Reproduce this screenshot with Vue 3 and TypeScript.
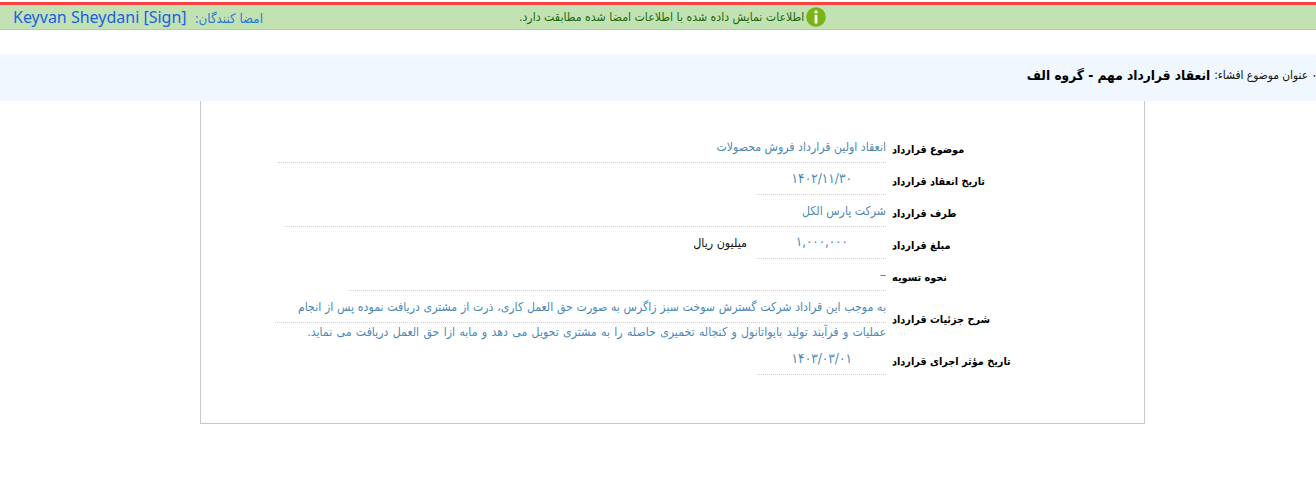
<script setup lang="ts">
interface Row { label: string; value: string; kind: string; unit?: string }
const rows: Row[] = [
  { label: 'موضوع قرارداد', value: 'انعقاد اولین قرارداد فروش محصولات', kind: 'w608' },
  { label: 'تاریخ انعقاد قرارداد', value: '۱۴۰۲/۱۱/۳۰', kind: 'w129 date' },
  { label: 'طرف قرارداد', value: 'شرکت پارس الکل', kind: 'w601' },
  { label: 'مبلغ قرارداد', value: '۱,۰۰۰,۰۰۰', kind: 'w129 date amount', unit: 'میلیون ریال' },
  { label: 'نحوه تسویه', value: '–', kind: 'w537 dash' }
]
</script>

<template>
  <div class="page">
    <header class="status">
      <div class="signers">
        <a class="signer">Keyvan Sheydani [Sign]</a>
        <span class="signer-label">امضا کنندگان:</span>
      </div>
      <div class="message">
        <span class="message-text">اطلاعات نمایش داده شده با اطلاعات امضا شده مطابقت دارد.</span>
        <svg class="info" width="20" height="20" viewBox="0 0 20 20" aria-hidden="true">
          <circle cx="10" cy="10" r="9.8" fill="#78b416" />
          <circle cx="10" cy="5" r="1.7" fill="#fff" />
          <rect x="8.6" y="8" width="2.8" height="8.5" fill="#fff" />
        </svg>
      </div>
    </header>

    <section class="band">
      <span class="bullet">•</span>
      <span class="band-label">عنوان موضوع افشاء:</span>
      <strong class="band-title">انعقاد قرارداد مهم - گروه الف</strong>
    </section>

    <main class="card">
      <div v-for="row in rows" :key="row.label" class="row">
        <div class="values">
          <span v-if="row.unit" class="unit">{{ row.unit }}</span>
          <span class="value" :class="row.kind">{{ row.value }}</span>
        </div>
        <div class="label">{{ row.label }}</div>
      </div>

      <div class="row row-detail">
        <div class="values detail">
          <div class="line line-first">به موجب این قراداد شرکت گسترش سوخت سبز زاگرس به صورت حق العمل کاری، ذرت از مشتری دریافت نموده پس از انجام</div>
          <div class="line">عملیات و فرآیند تولید بایواتانول و کنجاله تخمیری حاصله را به مشتری تحویل می دهد و مابه ازا حق العمل دریافت می نماید.</div>
        </div>
        <div class="label">شرح جزئیات قرارداد</div>
      </div>

      <div class="row row-last">
        <div class="values">
          <span class="value w129 date">۱۴۰۳/۰۳/۰۱</span>
        </div>
        <div class="label">تاریخ مؤثر اجرای قرارداد</div>
      </div>
    </main>
  </div>
</template>

<style>
html, body { margin: 0; background: #fff; }
</style>

<style scoped>
.page {
  width: 1316px;
  height: 488px;
  padding-top: 2px;
  box-sizing: border-box;
  overflow: hidden;
  background: #fff;
  font-family: "DejaVu Sans Condensed", "DejaVu Sans", "Liberation Sans", sans-serif;
}
.status {
  display: flex;
  align-items: center;
  height: 28px;
  box-sizing: border-box;
  border-top: 3px solid #f94144;
  border-bottom: 1px solid #b9c9b0;
  background: #c2e2b3;
  padding-left: 13px;
}
.signers {
  display: flex;
  align-items: center;
  gap: 8px;
  width: 506px;
}
.signer {
  color: #1a5fe6;
  font-size: 16px;
  font-family: "Noto Sans", "DejaVu Sans", sans-serif;
}
.signer-label {
  color: #2a78d6;
  font-size: 13.2px;
  direction: rtl;
  padding-top: 2px;
}
.message {
  display: flex;
  align-items: center;
  gap: 2px;
}
.message-text {
  color: #1c6a10;
  font-size: 12.2px;
  direction: rtl;
}
.info { flex: none; }
.band {
  display: flex;
  direction: rtl;
  align-items: center;
  height: 47px;
  box-sizing: border-box;
  padding-bottom: 5px;
  margin-top: 24px;
  background: #f0f7fe;
  color: #111;
}
.bullet {
  width: 3px;
  font-size: 6px;
  margin-left: 5px;
}
.band-label {
  font-size: 11.8px;
  margin-left: 4px;
}
.band-title {
  font-size: 13.6px;
  color: #000;
}
.card {
  margin-left: 200px;
  width: 945px;
  height: 323px;
  box-sizing: border-box;
  border: 1px solid #c8c8c8;
  border-top: 0;
  padding-top: 30px;
}
.row {
  display: flex;
  height: 32px;
  gap: 6px;
}
.values {
  display: flex;
  justify-content: flex-end;
  align-items: flex-start;
  width: 685px;
  flex: none;
}
.value {
  display: block;
  box-sizing: border-box;
  height: 32px;
  line-height: 32px;
  direction: rtl;
  color: #4a88b5;
  font-size: 12.2px;
  border-bottom: 1px dotted #d2d2d2;
  white-space: nowrap;
}
.w608 { width: 608px; }
.w601 { width: 601px; }
.w537 { width: 537px; }
.w129 { width: 129px; }
.date { padding-right: 34px; font-size: 13.5px; line-height: 30px; }
.amount { padding-right: 38px; font-size: 13.2px; }
.dash { font-size: 14px; line-height: 30px; }
.unit {
  direction: rtl;
  font-size: 12.4px;
  line-height: 32px;
  color: #111;
  width: 56px;
  margin-right: 10px;
  white-space: nowrap;
}
.label {
  flex: 1;
  padding-top: 3px;
  line-height: 32px;
  text-align: left;
  unicode-bidi: plaintext;
  font-size: 10.8px;
  font-weight: 700;
  color: #000;
}
.row-detail { height: 55px; }
.row-detail .label { padding-top: 13px; }
.detail {
  flex-direction: column;
  justify-content: flex-start;
  align-items: flex-end;
}
.line {
  direction: rtl;
  width: 611px;
  box-sizing: border-box;
  color: #4a88b5;
  font-size: 12.2px;
  white-space: nowrap;
}
.line-first {
  height: 32px;
  line-height: 32px;
  word-spacing: 0.25px;
  border-bottom: 1px dotted #d2d2d2;
}
.line + .line { line-height: 19px; word-spacing: 0.85px; }
.row-last { height: 29px; }
.row-last .value { height: 29px; line-height: 24px; }
.row-last .label { padding-top: 0; line-height: 32px; }
</style>
